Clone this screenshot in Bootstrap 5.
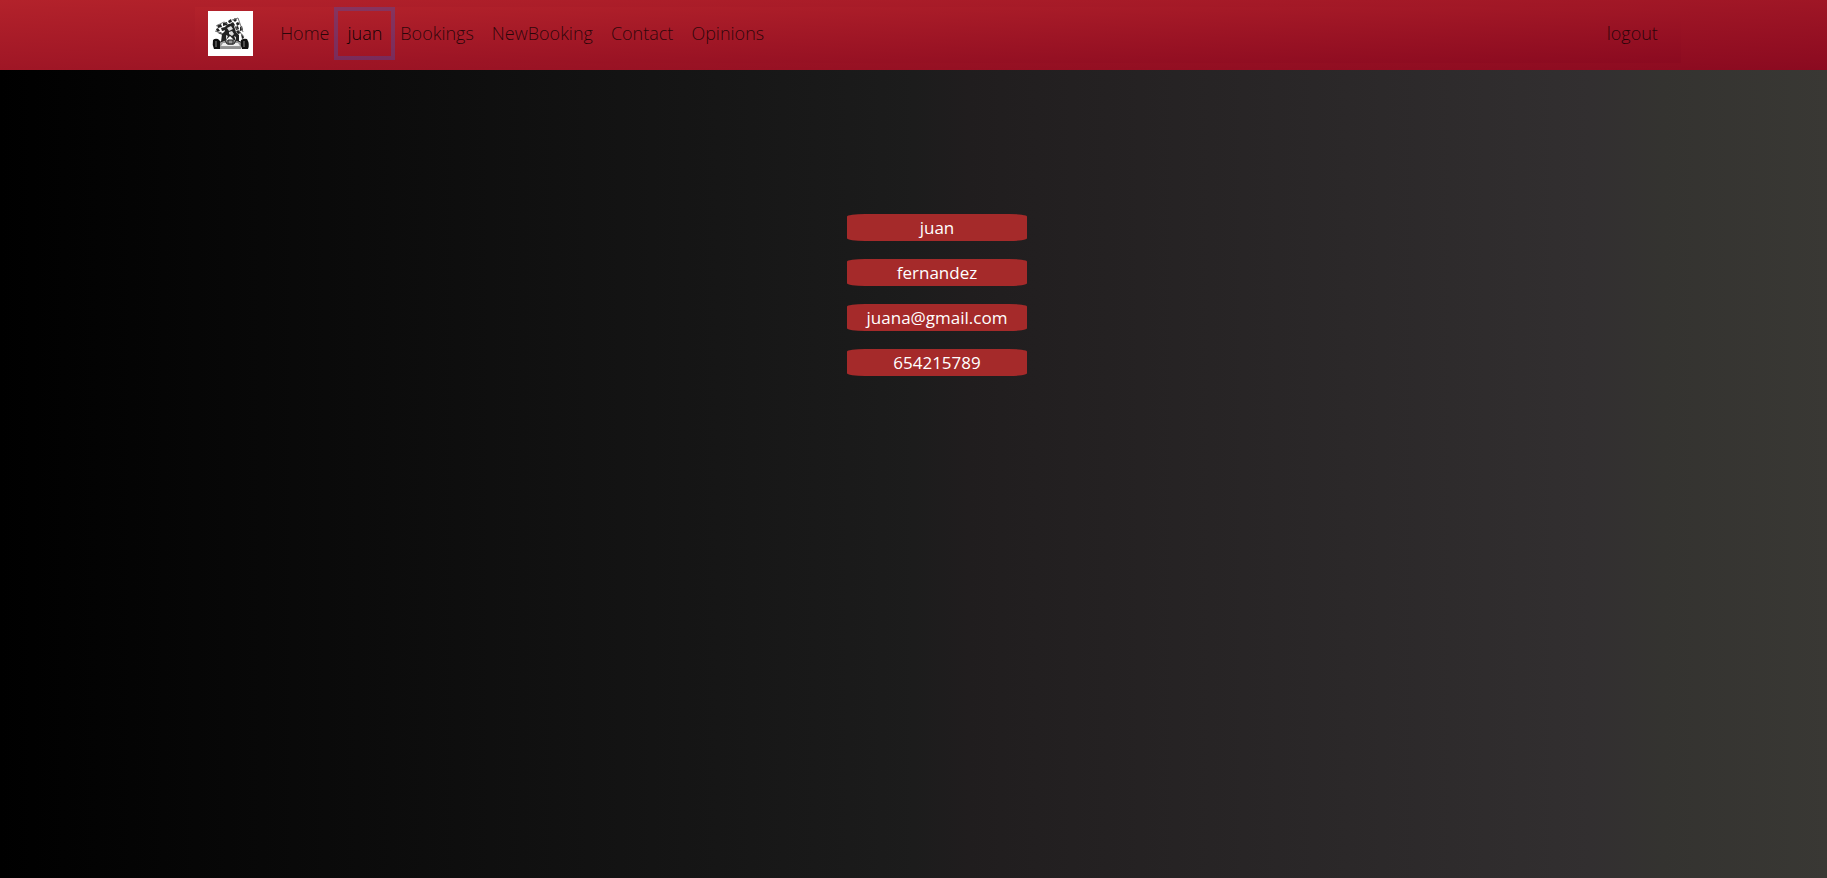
<!DOCTYPE html>
<html lang="en">
<head>
<meta charset="utf-8">
<meta name="viewport" content="width=device-width, initial-scale=1">
<title>Karting profile</title>
<link href="https://cdn.jsdelivr.net/npm/bootstrap@5.3.0/dist/css/bootstrap.min.css" rel="stylesheet">
<style>
:root { --nav-red: linear-gradient(to bottom right, #b3222b, #8b0a20); }
body {
  font-family: "Open Sans", "Noto Sans", sans-serif;
  font-size: 17px;
  line-height: 27px;
  background: linear-gradient(to right, #000 0%, #1c1c1c 50%, #201d1e 53%, #322f30 87%, #343330 91%, #393834 100%);
}
.site-bar { background: var(--nav-red); padding: 7px 8%; }
.site-bar-inner { background: var(--nav-red); margin-left: 49px; padding: 4px 14px 7px 13px; }
.brand-mark { width: 45px; height: 45px; margin-right: 18px; }
.site-bar .navbar-nav .nav-link { padding: 9px; color: rgba(0, 0, 0, .75); font-weight: 300; font-size: 18px; }
.site-bar .navbar-nav .nav-link.active { color: rgba(0, 0, 0, .95); box-shadow: 0 0 0 4px rgba(13, 110, 253, .25); }
.profile { padding: 144px 8% 0; }
.profile-list { margin-left: 47px; gap: 18px; }
.profile-list li { width: 180px; background: brown; border-radius: 10%; }
</style>
</head>
<body class="min-vh-100">
<header class="site-bar">
  <nav class="site-bar-inner navbar-expand d-flex align-items-center" aria-label="Main">
    <a class="brand-mark d-block" href="#" aria-label="Karting home">
      <svg class="d-block" width="45" height="45" viewBox="0 0 45 45" aria-hidden="true">
        <path fill="#fff" d="M0 0h45v45H0z"/>
        <!-- chequered flags -->
        <path fill="#222" d="M20 10l3-2 1 3-3 1zM25 9l2-2 2 2-2 2zM9 14l4-1 1 3-4 1zM15 12l4-1v3l-4 1zM8 18l2-1 2 3-3 1zM13 17l4-1 1 3-4 1zM22 13l3-2 2 3-3 2zM28 12l2-1 2 2-3 2zM27 16l3-1 1 3-3 1zM32 16l2-1 1 4-3 1zM28 20l3-1 2 3-3 1zM33 23l2 1 1 3-2 1zM10 22l3-1 2 3-3-1z"/>
        <path fill="none" stroke="#777" d="M8 15l8-4 4 2M7 20l8 3M24 9l6-2 5 14M26 14l10 12"/>
        <!-- driver -->
        <path fill="#222" d="M17 16q4-6 9-1l2 6 3 3v7l-4 2-2-5-3-3-3 3-2 5-4-2 1-8 3-3z"/>
        <path fill="#ddd" d="M19 17l4-2 2 3-4 2zM21 21l3-1 2 3-2 2-3-2zM18 24l2 1-2 4zM26 25l2 1v4z"/>
        <!-- kart body and wheels -->
        <path fill="#999" d="M12 31l6-2h9l6 2 1 5H11z"/>
        <path fill="#eee" d="M15 32h15l2 3H13z"/>
        <path fill="none" stroke="#222" d="M10 32l7-3 2 4h7l2-4 7 3M12 37h21M20 29h5v4h-5z"/>
        <path fill="#111" d="M5 29q2-2 5-1l2 2v8H6q-2-4-1-9zM33 29q3-2 6-1 3 5 1 10h-6q-2-4-1-9z"/>
        <path stroke="#888" d="M8 30v6M36 30v6"/>
      </svg>
    </a>
    <ul class="navbar-nav">
      <li class="nav-item"><a class="nav-link" href="#">Home</a></li>
      <li class="nav-item"><a class="nav-link active" href="#" aria-current="page">juan</a></li>
      <li class="nav-item"><a class="nav-link" href="#">Bookings</a></li>
      <li class="nav-item"><a class="nav-link" href="#">NewBooking</a></li>
      <li class="nav-item"><a class="nav-link" href="#">Contact</a></li>
      <li class="nav-item"><a class="nav-link" href="#">Opinions</a></li>
    </ul>
    <ul class="navbar-nav ms-auto">
      <li class="nav-item"><a class="nav-link" href="#">logout</a></li>
    </ul>
  </nav>
</header>
<main class="profile">
  <ul class="profile-list list-unstyled d-flex flex-column align-items-center text-center text-white mb-0">
    <li>juan</li>
    <li>fernandez</li>
    <li>juana@gmail.com</li>
    <li>654215789</li>
  </ul>
</main>
<script src="https://cdn.jsdelivr.net/npm/bootstrap@5.3.0/dist/js/bootstrap.bundle.min.js"></script>
</body>
</html>
